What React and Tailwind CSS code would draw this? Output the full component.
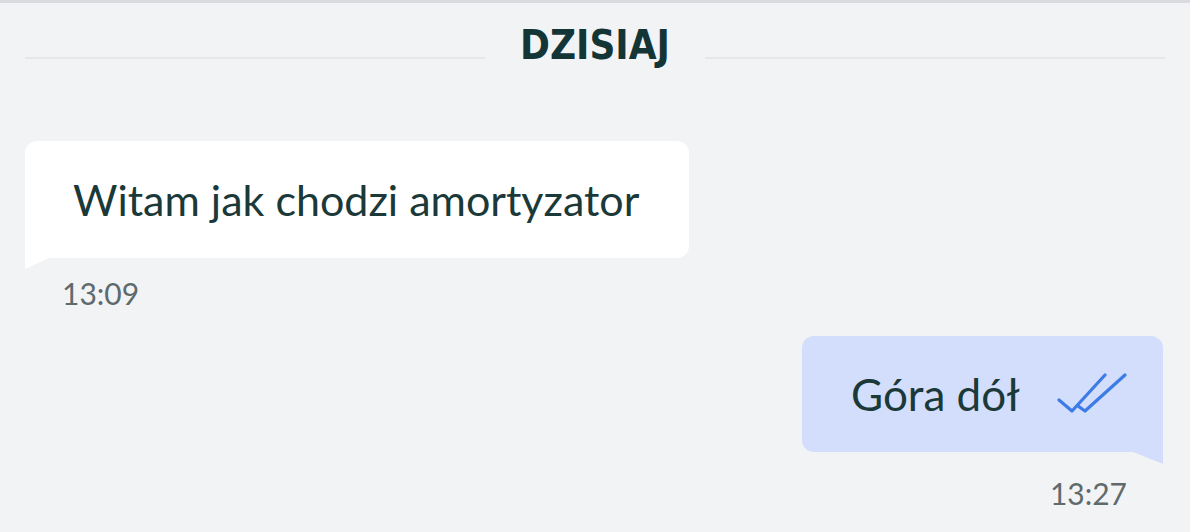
import React from 'react';

function DoubleCheck() {
    return (
        <svg width="70" height="42" viewBox="0 0 70 42" fill="none" stroke="#3d7be6" strokeWidth="3.2" strokeLinecap="round" strokeLinejoin="round">
            <path d="M2 28l13 11L48 3" />
            <path d="M21 34l7 5L68 3" />
        </svg>
    );
}

export default function App() {
    return (
        <div className="w-[1190px] h-[532px] bg-[#f2f3f5] border-t-[3px] border-[#d9dbde] overflow-hidden" style={{ fontFamily: 'Lato, "Open Sans", sans-serif' }}>
            <div className="flex items-center px-[25px] pt-[22px]">
                <div className="flex-1 h-[2px] bg-[#e5e8e9] mt-[26px]" />
                <div className="w-[220px] text-center text-[40px] font-bold text-[#143536] leading-[40px]" style={{ fontFamily: '"DejaVu Sans Condensed", "DejaVu Sans", sans-serif' }}>DZISIAJ</div>
                <div className="flex-1 h-[2px] bg-[#e5e8e9] mt-[26px]" />
            </div>

            <div className="px-[25px] mt-[76px]">
                <div className="relative inline-flex bg-white rounded-[12px] rounded-bl-none h-[117px] w-[664px] items-center pl-[48px]">
                    <span className="text-[43px] text-[#1b3939] leading-none">Witam jak chodzi amortyzator</span>
                    <svg className="absolute left-0 top-full" width="24" height="11" viewBox="0 0 24 11">
                        <path d="M0 0h24L0 11z" fill="#ffffff" />
                    </svg>
                </div>
                <div className="mt-[20px] ml-[37px] text-[30px] text-[#5e6a6b] leading-none">13:09</div>
            </div>

            <div className="flex flex-col items-end pr-[27px] mt-[28px]">
                <div className="relative flex bg-[#d2defb] rounded-[12px] rounded-br-none h-[116px] w-[361px] items-center pl-[49px]">
                    <span className="text-[44px] text-[#1b3939] leading-none">Góra dół</span>
                    <div className="ml-[37px] mt-[-2px]">
                        <DoubleCheck />
                    </div>
                    <svg className="absolute right-0 top-full" width="30" height="12" viewBox="0 0 30 12">
                        <path d="M0 0h30v12z" fill="#d2defb" />
                    </svg>
                </div>
                <div className="mt-[26px] mr-[36px] text-[30px] text-[#5e6a6b] leading-none">13:27</div>
            </div>
        </div>
    );
}
